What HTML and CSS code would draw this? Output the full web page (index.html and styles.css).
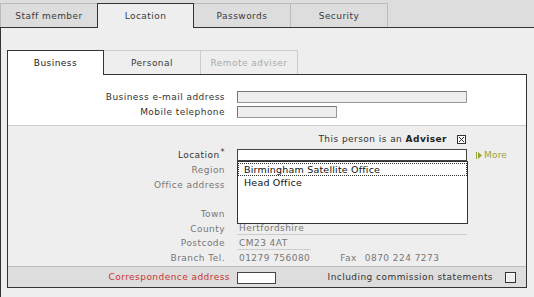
FILE: index.html
```html
<!DOCTYPE html>
<html>
<head>
<meta charset="utf-8">
<link rel="stylesheet" href="styles.css">
</head>
<body>
<div class="tabs">
  <div class="tab">Staff member</div>
  <div class="tab active">Location</div>
  <div class="tab">Passwords</div>
  <div class="tab">Security</div>
</div>
<div class="panel">
  <div class="subtabs">
    <div class="stab active">Business</div>
    <div class="stab">Personal</div>
    <div class="stab disabled">Remote adviser</div>
  </div>
  <div class="card">
    <div class="sec white">
      <div class="frow">
        <div class="lbl">Business e-mail address</div>
        <div class="inp wide ro"></div>
      </div>
      <div class="frow">
        <div class="lbl">Mobile telephone</div>
        <div class="inp short ro"></div>
      </div>
    </div>
    <div class="sec grey">
      <div class="adviser">
        <div class="advbox"><span>This person is an <b>Adviser</b></span>
          <svg class="xbox" width="9" height="9" viewBox="0 0 9 9"><rect x="0.5" y="0.5" width="8" height="8" fill="#fff" stroke="#333"/><path d="M2 2L7 7M7 2L2 7" stroke="#333" stroke-width="1"/></svg>
        </div>
      </div>
      <div class="grid">
        <div class="lbl dark">Location<sup>*</sup></div>
        <div class="val">
          <div class="inp wide white-inp"></div>
          <div class="dropdown">
            <div class="opt focus">Birmingham Satellite Office</div>
            <div class="opt">Head Office</div>
          </div>
        </div>
        <div class="more"><svg width="6" height="7" viewBox="0 0 6 7"><rect x="0" y="0" width="1" height="7" fill="#99a63a"/><path d="M2 0L6 3.5L2 7Z" fill="#99a63a"/></svg>More</div>

        <div class="lbl">Region</div><div class="val"></div><div></div>
        <div class="lbl">Office address</div><div class="val"></div><div></div>
        <div class="lbl"></div><div class="val"></div><div></div>
        <div class="lbl">Town</div><div class="val"></div><div></div>
        <div class="lbl">County</div><div class="val"><span class="txt u wide">Hertfordshire</span></div><div></div>
        <div class="lbl">Postcode</div><div class="val"><span class="txt u pc">CM23 4AT</span></div><div></div>
        <div class="lbl">Branch Tel.</div><div class="val"><span class="txt">01279 756080</span><span class="fax">Fax</span><span class="txt">0870 224 7273</span></div><div></div>
      </div>
    </div>
    <div class="bar">
      <div class="corr">Correspondence address</div>
      <div class="inp corr-inp white-inp"></div>
      <div class="incl">Including commission statements</div>
      <div class="cbox"></div>
    </div>
  </div>
</div>
</body>
</html>
```
FILE: styles.css
```css
body {
  margin: 0;
  background: #eeeeee;
  font-family: "DejaVu Sans", Verdana, sans-serif;
  font-size: 9px;
  letter-spacing: 0.45px;
  color: #333;
  overflow: hidden;
}
.tabs {
  display: flex;
  align-items: flex-end;
  height: 27px;
  background: #dddddd;
  position: relative;
  z-index: 1;
}
.tab {
  box-sizing: border-box;
  width: 98px;
  height: 24px;
  margin-right: -1px;
  border: 1px solid #bbbbbb;
  border-bottom: none;
  background: #dddddd;
  display: flex;
  align-items: center;
  justify-content: center;
  color: #3a3a3a;
}
.tab.active {
  background: #eeeeee;
  border-color: #333;
  height: 25px;
  margin-bottom: -1px;
  position: relative;
  z-index: 2;
  width: 97px;
}
.panel {
  border-top: 1px solid #333;
  border-left: 1px solid #333;
  padding: 22px 0 10px 6px;
}
.subtabs {
  display: flex;
  height: 24px;
  position: relative;
  z-index: 1;
}
.stab {
  box-sizing: border-box;
  width: 98px;
  height: 24px;
  margin-right: -1px;
  border: 1px solid #cccccc;
  border-bottom: none;
  background: #eeeeee;
  display: flex;
  align-items: center;
  justify-content: center;
  color: #3a3a3a;
}
.stab.active {
  background: #fff;
  border-color: #333;
  height: 25px;
  margin-bottom: -1px;
  width: 97px;
  position: relative;
  z-index: 2;
  color: #222;
}
.stab.disabled { color: #aaaaaa; }
.card {
  box-sizing: border-box;
  width: 520px;
  border: 1px solid #333;
}
.sec.white {
  background: #fff;
  padding: 16px 0 7px;
  border-bottom: 1px solid #cccccc;
  display: flex;
  flex-direction: column;
  gap: 3px;
}
.frow {
  display: grid;
  grid-template-columns: 217px 230px;
  column-gap: 12px;
  align-items: center;
  height: 12px;
}
.lbl {
  text-align: right;
  color: #777;
  white-space: nowrap;
}
.white .lbl, .lbl.dark { color: #333; }
.lbl sup { font-size: 8px; vertical-align: 3px; line-height: 0; margin-left: 1px; }
.inp {
  box-sizing: border-box;
  height: 12px;
  border: 1px solid #999;
  border-top-color: #777;
  border-left-color: #777;
}
.inp.ro { background: #eeeeee; }
.inp.wide { width: 230px; }
.inp.short { width: 100px; }
.white-inp { background: #fff; border-color: #444; }
.sec.grey {
  padding: 7px 0 0;
}
.adviser {
  display: grid;
  grid-template-columns: 217px 230px;
  column-gap: 12px;
  height: 12px;
  margin-bottom: 3px;
}
.advbox {
  grid-column: 2;
  display: flex;
  align-items: center;
  justify-content: flex-end;
  gap: 10px;
  white-space: nowrap;
  color: #333;
}
.advbox b { color: #222; }
.xbox { margin-right: 1px; }
.grid {
  display: grid;
  grid-template-columns: 217px 230px auto;
  grid-auto-rows: 14.7px;
  column-gap: 12px;
  align-items: center;
}
.val {
  position: relative;
  display: flex;
  align-items: center;
  height: 100%;
  color: #777;
}
.dropdown {
  position: absolute;
  top: 13px;
  left: 0;
  width: 231px;
  height: 63px;
  box-sizing: border-box;
  background: #fff;
  border: 1px solid #333;
  padding-top: 1px;
  z-index: 3;
}
.opt {
  height: 13px;
  line-height: 13px;
  padding-left: 6px;
  color: #111;
  font-size: 9.5px;
  letter-spacing: 0.2px;
}
.opt.focus { outline: 1px dotted #333; outline-offset: -1px; }
.more {
  color: #99a63a;
  display: flex;
  align-items: center;
  gap: 2px;
  margin-left: -3px;
  letter-spacing: 0.2px;
}
.txt { padding-left: 2px; white-space: nowrap; }
.txt.u {
  border-bottom: 1px solid #cccccc;
  line-height: 12px;
  box-sizing: border-box;
}
.txt.u.wide { width: 230px; }
.txt.u.pc { width: 74px; }
.fax { margin-left: 30px; margin-right: 6px; }
.bar {
  height: 20px;
  background: #dddddd;
  border-top: 1px solid #bbbbbb;
  display: flex;
  align-items: center;
}
.corr {
  width: 222px;
  text-align: right;
  color: #cc3333;
  white-space: nowrap;
}
.corr-inp { width: 39px; margin-left: 7px; height: 12px; margin-top: 2px; }
.incl { margin-left: auto; color: #333; white-space: nowrap; }
.cbox {
  box-sizing: border-box;
  width: 11px;
  height: 11px;
  border: 1px solid #333;
  background: #eee;
  margin: 2px 10px 0 12px;
  box-shadow: inset 1px 1px 0 #fff;
}
```
